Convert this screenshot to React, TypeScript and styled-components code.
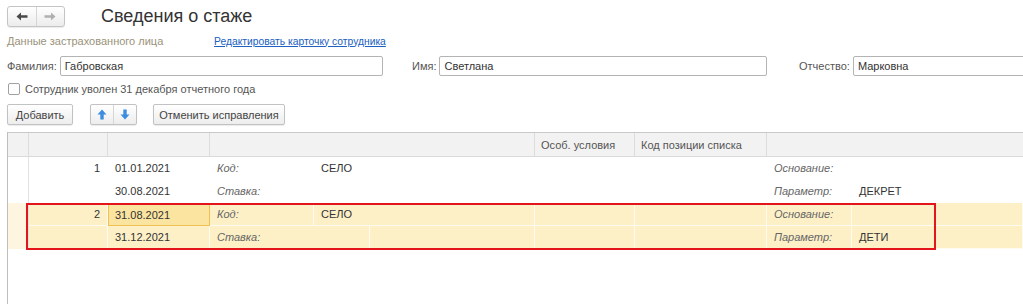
import React from 'react';
import styled, { createGlobalStyle, css } from 'styled-components';

const GlobalStyle = createGlobalStyle`
  html, body { margin: 0; padding: 0; background: #fff; }
  body {
    font-family: "Liberation Sans", Arial, sans-serif;
    font-size: 11px;
    color: #333;
    overflow: hidden;
  }
  * { box-sizing: border-box; }
`;

const Page = styled.div`
  width: 1023px;
  height: 304px;
  padding: 6px 0 0 7px;
  overflow: hidden;
  display: flex;
  flex-direction: column;
`;

const TopBar = styled.div`
  display: flex;
  align-items: center;
  height: 21px;
`;

const NavGroup = styled.div`
  display: flex;
  width: 58px;
  height: 21px;
  border: 1px solid #c4c4c4;
  border-radius: 3px;
  background: linear-gradient(#ffffff, #ececec);
  box-shadow: 0 1px 1px rgba(0, 0, 0, 0.08);
`;

const NavButton = styled.div<{ $divider?: boolean }>`
  flex: 1;
  display: flex;
  align-items: center;
  justify-content: center;
  ${(p) => p.$divider && css`border-left: 1px solid #d6d6d6;`}
`;

const Title = styled.h1`
  margin: 0 0 0 36px;
  font-size: 18px;
  font-weight: normal;
  color: #333;
  line-height: 21px;
`;

const InfoRow = styled.div`
  display: flex;
  align-items: center;
  height: 16px;
  margin-top: 6px;
`;

const Decoration = styled.span`
  width: 207px;
  color: #9a937a;
`;

const Link = styled.a`
  color: #2060c0;
  font-size: 10.3px;
  text-decoration: underline;
  cursor: pointer;
`;

const FieldRow = styled.div`
  display: flex;
  align-items: center;
  height: 20px;
  margin-top: 7px;
`;

const Field = styled.div<{ $w: number; $ml?: number }>`
  display: flex;
  align-items: center;
  width: ${(p) => p.$w}px;
  margin-left: ${(p) => p.$ml ?? 0}px;
  flex-shrink: 0;
`;

const Label = styled.span`
  color: #555;
  margin-right: 3px;
  white-space: nowrap;
`;

const Input = styled.div`
  flex: 1;
  height: 20px;
  border: 1px solid #b4b4b4;
  border-radius: 2px;
  padding: 0 4px;
  display: flex;
  align-items: center;
  color: #333;
  background: #fff;
`;

const CheckRow = styled.div`
  display: flex;
  align-items: center;
  height: 12px;
  margin-top: 7px;
  padding-left: 1px;
`;

const CheckBox = styled.span`
  width: 12px;
  height: 12px;
  border: 1px solid #a0a0a0;
  border-radius: 2px;
  background: #fff;
  margin-right: 5px;
`;

const CheckLabel = styled.span`
  color: #555;
`;

const ButtonRow = styled.div`
  display: flex;
  align-items: center;
  height: 21px;
  margin-top: 9px;
`;

const Button = styled.div<{ $ml?: number; $w: number }>`
  height: 21px;
  width: ${(p) => p.$w}px;
  margin-left: ${(p) => p.$ml ?? 0}px;
  border: 1px solid #c2c2c2;
  border-radius: 2px;
  background: linear-gradient(#ffffff, #ededed);
  box-shadow: 0 1px 1px rgba(0, 0, 0, 0.08);
  display: flex;
  align-items: center;
  justify-content: center;
  color: #444;
`;

const ArrowGroup = styled.div`
  display: flex;
  width: 47px;
  height: 21px;
  margin-left: 17px;
  border: 1px solid #c2c2c2;
  border-radius: 2px;
  background: linear-gradient(#ffffff, #ededed);
  box-shadow: 0 1px 1px rgba(0, 0, 0, 0.08);
`;

const COLS = '21px 79px 102px 104px 56px 165px 100px 132px 85px 1fr';

const Table = styled.div`
  margin-top: 7px;
  flex: 1;
  border-left: 1px solid #bdbdbd;
  border-top: 1px solid #c9c9c9;
`;

const HeaderRow = styled.div`
  display: grid;
  grid-template-columns: ${COLS};
  height: 24px;
  background: #f2f2f2;
  border-bottom: 1px solid #dadada;
`;

const HeaderCell = styled.div<{ $col: string; $last?: boolean }>`
  grid-column: ${(p) => p.$col};
  display: flex;
  align-items: center;
  padding: 0 6px;
  color: #555;
  border-right: ${(p) => (p.$last ? 'none' : '1px solid #dcdcdc')};
  white-space: nowrap;
`;

const BodyRow = styled.div<{ $selected?: boolean }>`
  position: relative;
  display: grid;
  grid-template-columns: ${COLS};
  grid-template-rows: 23px 23px;
  background: ${(p) => (p.$selected ? '#fdf0c7' : '#fff')};
`;

const Highlight = styled.div`
  position: absolute;
  left: 18px;
  top: 0;
  width: 910px;
  height: 47px;
  border: 2px solid #e3141b;
  pointer-events: none;
`;

const Cell = styled.div<{
  $col: string;
  $row: string;
  $align?: 'right';
  $italic?: boolean;
  $current?: boolean;
}>`
  grid-column: ${(p) => p.$col};
  grid-row: ${(p) => p.$row};
  display: flex;
  align-items: center;
  justify-content: ${(p) => (p.$align === 'right' ? 'flex-end' : 'flex-start')};
  padding: 0 7px;
  white-space: nowrap;
  color: ${(p) => (p.$italic ? '#666' : '#333')};
  font-style: ${(p) => (p.$italic ? 'italic' : 'normal')};
  border-right: 1px solid rgba(255, 255, 255, 0.7);
  border-bottom: 1px solid rgba(255, 255, 255, 0.7);
  ${(p) =>
    p.$current &&
    css`
      background: #fbe49f;
      border: 1px solid #f0c050;
      padding: 0 6px;
    `}
`;

const LeadCell = styled.div<{ $selected?: boolean }>`
  grid-column: 1;
  grid-row: 1 / 3;
  border-right: 1px solid #e2e2e2;
  background: ${(p) => (p.$selected ? '#fdf5df' : '#fff')};
`;

const NavArrow = ({ dir, color }: { dir: 'left' | 'right'; color: string }) => (
  <svg width="12" height="9" viewBox="0 0 12 9">
    {dir === 'left' ? (
      <path d="M0.5 4.5 L5 0.5 L5 3.2 L11.5 3.2 L11.5 5.8 L5 5.8 L5 8.5 Z" fill={color} />
    ) : (
      <path d="M11.5 4.5 L7 0.5 L7 3.2 L0.5 3.2 L0.5 5.8 L7 5.8 L7 8.5 Z" fill={color} />
    )}
  </svg>
);

const MoveArrow = ({ dir }: { dir: 'up' | 'down' }) => (
  <svg width="10" height="11" viewBox="0 0 10 11">
    {dir === 'up' ? (
      <path d="M5 0.5 L9.5 5.5 L6.7 5.5 L6.7 10.5 L3.3 10.5 L3.3 5.5 L0.5 5.5 Z" fill="#3b8ede" />
    ) : (
      <path d="M5 10.5 L9.5 5.5 L6.7 5.5 L6.7 0.5 L3.3 0.5 L3.3 5.5 L0.5 5.5 Z" fill="#3b8ede" />
    )}
  </svg>
);

type RowData = {
  num: string;
  from: string;
  to: string;
  code: string;
  param: string;
  selected?: boolean;
};

const rows: RowData[] = [
  { num: '1', from: '01.01.2021', to: '30.08.2021', code: 'СЕЛО', param: 'ДЕКРЕТ' },
  { num: '2', from: '31.08.2021', to: '31.12.2021', code: 'СЕЛО', param: 'ДЕТИ', selected: true },
];

export default function App() {
  return (
    <>
      <GlobalStyle />
      <Page>
        <TopBar>
          <NavGroup>
            <NavButton>
              <NavArrow dir="left" color="#4a4a4a" />
            </NavButton>
            <NavButton $divider>
              <NavArrow dir="right" color="#b0b0b0" />
            </NavButton>
          </NavGroup>
          <Title>Сведения о стаже</Title>
        </TopBar>

        <InfoRow>
          <Decoration>Данные застрахованного лица</Decoration>
          <Link>Редактировать карточку сотрудника</Link>
        </InfoRow>

        <FieldRow>
          <Field $w={376}>
            <Label>Фамилия:</Label>
            <Input>Габровская</Input>
          </Field>
          <Field $w={355} $ml={29}>
            <Label>Имя:</Label>
            <Input>Светлана</Input>
          </Field>
          <Field $w={300} $ml={32}>
            <Label>Отчество:</Label>
            <Input>Марковна</Input>
          </Field>
        </FieldRow>

        <CheckRow>
          <CheckBox />
          <CheckLabel>Сотрудник уволен 31 декабря отчетного года</CheckLabel>
        </CheckRow>

        <ButtonRow>
          <Button $w={66}>Добавить</Button>
          <ArrowGroup>
            <NavButton>
              <MoveArrow dir="up" />
            </NavButton>
            <NavButton $divider>
              <MoveArrow dir="down" />
            </NavButton>
          </ArrowGroup>
          <Button $w={132} $ml={16}>Отменить исправления</Button>
        </ButtonRow>

        <Table>
          <HeaderRow>
            <HeaderCell $col="1" />
            <HeaderCell $col="2" />
            <HeaderCell $col="3" />
            <HeaderCell $col="4 / 7" />
            <HeaderCell $col="7">Особ. условия</HeaderCell>
            <HeaderCell $col="8">Код позиции списка</HeaderCell>
            <HeaderCell $col="9 / 11" $last />
          </HeaderRow>

          {rows.map((r) => (
            <BodyRow key={r.num} $selected={r.selected}>
              <LeadCell $selected={r.selected} />
              <Cell $col="2" $row="1" $align="right">{r.num}</Cell>
              <Cell $col="2" $row="2" />
              <Cell $col="3" $row="1" $current={r.selected}>{r.from}</Cell>
              <Cell $col="3" $row="2">{r.to}</Cell>
              <Cell $col="4" $row="1" $italic>Код:</Cell>
              <Cell $col="5 / 7" $row="1">{r.code}</Cell>
              <Cell $col="4 / 6" $row="2" $italic>Ставка:</Cell>
              <Cell $col="6" $row="2" />
              <Cell $col="7" $row="1" />
              <Cell $col="7" $row="2" />
              <Cell $col="8" $row="1" />
              <Cell $col="8" $row="2" />
              <Cell $col="9" $row="1" $italic>Основание:</Cell>
              <Cell $col="9" $row="2" $italic>Параметр:</Cell>
              <Cell $col="10" $row="1" />
              <Cell $col="10" $row="2">{r.param}</Cell>
              {r.selected && <Highlight />}
            </BodyRow>
          ))}
        </Table>
      </Page>
    </>
  );
}
